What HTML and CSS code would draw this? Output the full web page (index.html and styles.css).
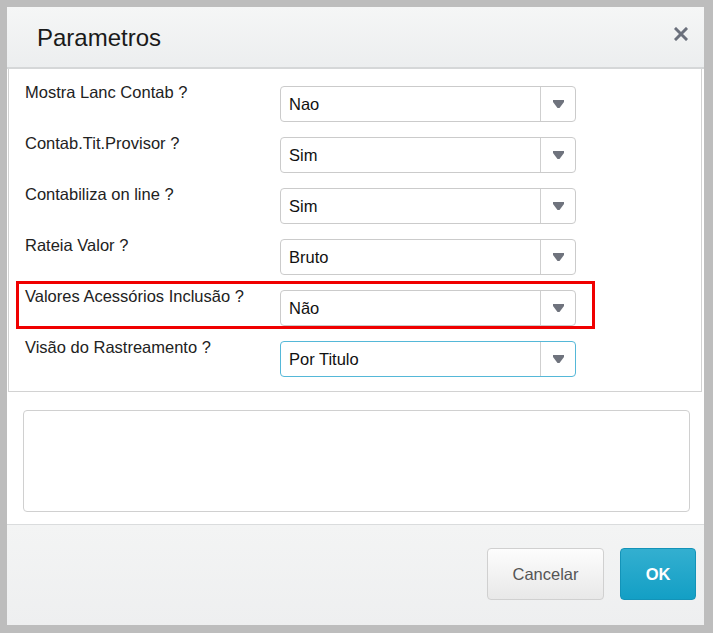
FILE: index.html
```html
<!DOCTYPE html>
<html lang="pt">
<head>
    <meta charset="UTF-8">
    <title>Parametros</title>
    <link rel="stylesheet" href="styles.css">
</head>
<body>
    <div class="dialog">
        <div class="dialog-header">
            <h1 class="dialog-title">Parametros</h1>
            <button class="close-btn" aria-label="Fechar">
                <svg width="14" height="14" viewBox="0 0 14 14">
                    <path d="M2 2 L12 12 M12 2 L2 12" stroke="#6b707c" stroke-width="3" stroke-linecap="square"/>
                </svg>
            </button>
        </div>

        <div class="params">
            <div class="param-row">
                <label class="param-label">Mostra Lanc Contab ?</label>
                <div class="combo"><span class="combo-value">Nao</span><span class="combo-arrow"><svg width="11" height="8" viewBox="0 0 11 8"><path d="M0 0 H11 V2 L6.5 8 H4.5 L0 2 Z" fill="#6f737d"/></svg></span></div>
            </div>
            <div class="param-row">
                <label class="param-label">Contab.Tit.Provisor ?</label>
                <div class="combo"><span class="combo-value">Sim</span><span class="combo-arrow"><svg width="11" height="8" viewBox="0 0 11 8"><path d="M0 0 H11 V2 L6.5 8 H4.5 L0 2 Z" fill="#6f737d"/></svg></span></div>
            </div>
            <div class="param-row">
                <label class="param-label">Contabiliza on line ?</label>
                <div class="combo"><span class="combo-value">Sim</span><span class="combo-arrow"><svg width="11" height="8" viewBox="0 0 11 8"><path d="M0 0 H11 V2 L6.5 8 H4.5 L0 2 Z" fill="#6f737d"/></svg></span></div>
            </div>
            <div class="param-row">
                <label class="param-label">Rateia Valor ?</label>
                <div class="combo"><span class="combo-value">Bruto</span><span class="combo-arrow"><svg width="11" height="8" viewBox="0 0 11 8"><path d="M0 0 H11 V2 L6.5 8 H4.5 L0 2 Z" fill="#6f737d"/></svg></span></div>
            </div>
            <div class="param-row highlight">
                <label class="param-label">Valores Acessórios Inclusão ?</label>
                <div class="combo"><span class="combo-value">Não</span><span class="combo-arrow"><svg width="11" height="8" viewBox="0 0 11 8"><path d="M0 0 H11 V2 L6.5 8 H4.5 L0 2 Z" fill="#6f737d"/></svg></span></div>
            </div>
            <div class="param-row">
                <label class="param-label">Visão do Rastreamento ?</label>
                <div class="combo focused"><span class="combo-value">Por Titulo</span><span class="combo-arrow"><svg width="11" height="8" viewBox="0 0 11 8"><path d="M0 0 H11 V2 L6.5 8 H4.5 L0 2 Z" fill="#6f737d"/></svg></span></div>
            </div>
        </div>

        <div class="help-area">
            <div class="help-box"></div>
        </div>

        <div class="dialog-footer">
            <button class="btn btn-default">Cancelar</button>
            <button class="btn btn-primary">OK</button>
        </div>
    </div>
</body>
</html>
```

FILE: styles.css
```css
* {
    margin: 0;
    padding: 0;
    box-sizing: border-box;
    font-family: 'Liberation Sans', Arial, sans-serif;
}

body {
    background: #bdbdbd;
    width: 713px;
    height: 633px;
    overflow: hidden;
}

.dialog {
    margin: 7px 0 0 7px;
    width: 697px;
    height: 618px;
    background: white;
    display: flex;
    flex-direction: column;
}

.dialog-header {
    height: 62px;
    background: linear-gradient(180deg, #f5f6f6 0%, #eceeef 100%);
    border-bottom: 2px solid #d5d7d8;
    display: flex;
    align-items: center;
    justify-content: space-between;
    padding: 0 16px 0 30px;
}

.dialog-title {
    font-size: 24px;
    font-weight: normal;
    color: #1a1a1a;
    margin-top: 2px;
}

.close-btn {
    background: none;
    border: none;
    width: 14px;
    height: 14px;
    display: flex;
    margin-top: -7px;
}

.params {
    margin: 0 2px 0 1px;
    border: 1px solid #d2d2d2;
    border-top: none;
    padding: 13px 0 14px 16px;
    display: flex;
    flex-direction: column;
    gap: 11px;
}

.param-row {
    display: flex;
    align-items: flex-start;
    position: relative;
}

.param-label {
    width: 255px;
    font-size: 16.5px;
    line-height: 20px;
    color: #222;
}

.highlight::after {
    content: '';
    position: absolute;
    left: -9px;
    top: -5px;
    width: 579px;
    height: 48px;
    border: 3px solid #f00000;
    box-sizing: border-box;
}

.combo {
    margin-top: 4px;
    width: 296px;
    height: 36px;
    border: 1px solid #cbcbcb;
    border-radius: 4px;
    display: flex;
    align-items: center;
    background: white;
}

.combo.focused {
    border-color: #55b8d8;
}

.combo-value {
    flex-grow: 1;
    padding-left: 8px;
    font-size: 16.5px;
    color: #111;
}

.combo-arrow {
    width: 35px;
    height: 100%;
    border-left: 1px solid #cfcfcf;
    display: flex;
    align-items: center;
    justify-content: center;
}

.help-area {
    padding: 18px 14px 12px 16px;
}

.help-box {
    height: 102px;
    border: 1px solid #d0d0d0;
    border-radius: 4px;
}

.dialog-footer {
    flex-grow: 1;
    border-top: 1px solid #dadcdd;
    background: linear-gradient(180deg, #f3f4f4 0%, #eeeff0 100%);
    display: flex;
    justify-content: flex-end;
    align-items: flex-start;
    gap: 16px;
    padding: 23px 8px 0 0;
}

.btn {
    height: 52px;
    border-radius: 4px;
    font-size: 16.5px;
    cursor: pointer;
}

.btn-default {
    width: 117px;
    color: #555;
    background: linear-gradient(180deg, #fdfdfd 0%, #e8e8e8 100%);
    border: 1px solid #d0d0d0;
}

.btn-primary {
    width: 76px;
    color: white;
    font-weight: bold;
    background: linear-gradient(180deg, #33afd0 0%, #139fc5 100%);
    border: 1px solid #1393b8;
}
```
